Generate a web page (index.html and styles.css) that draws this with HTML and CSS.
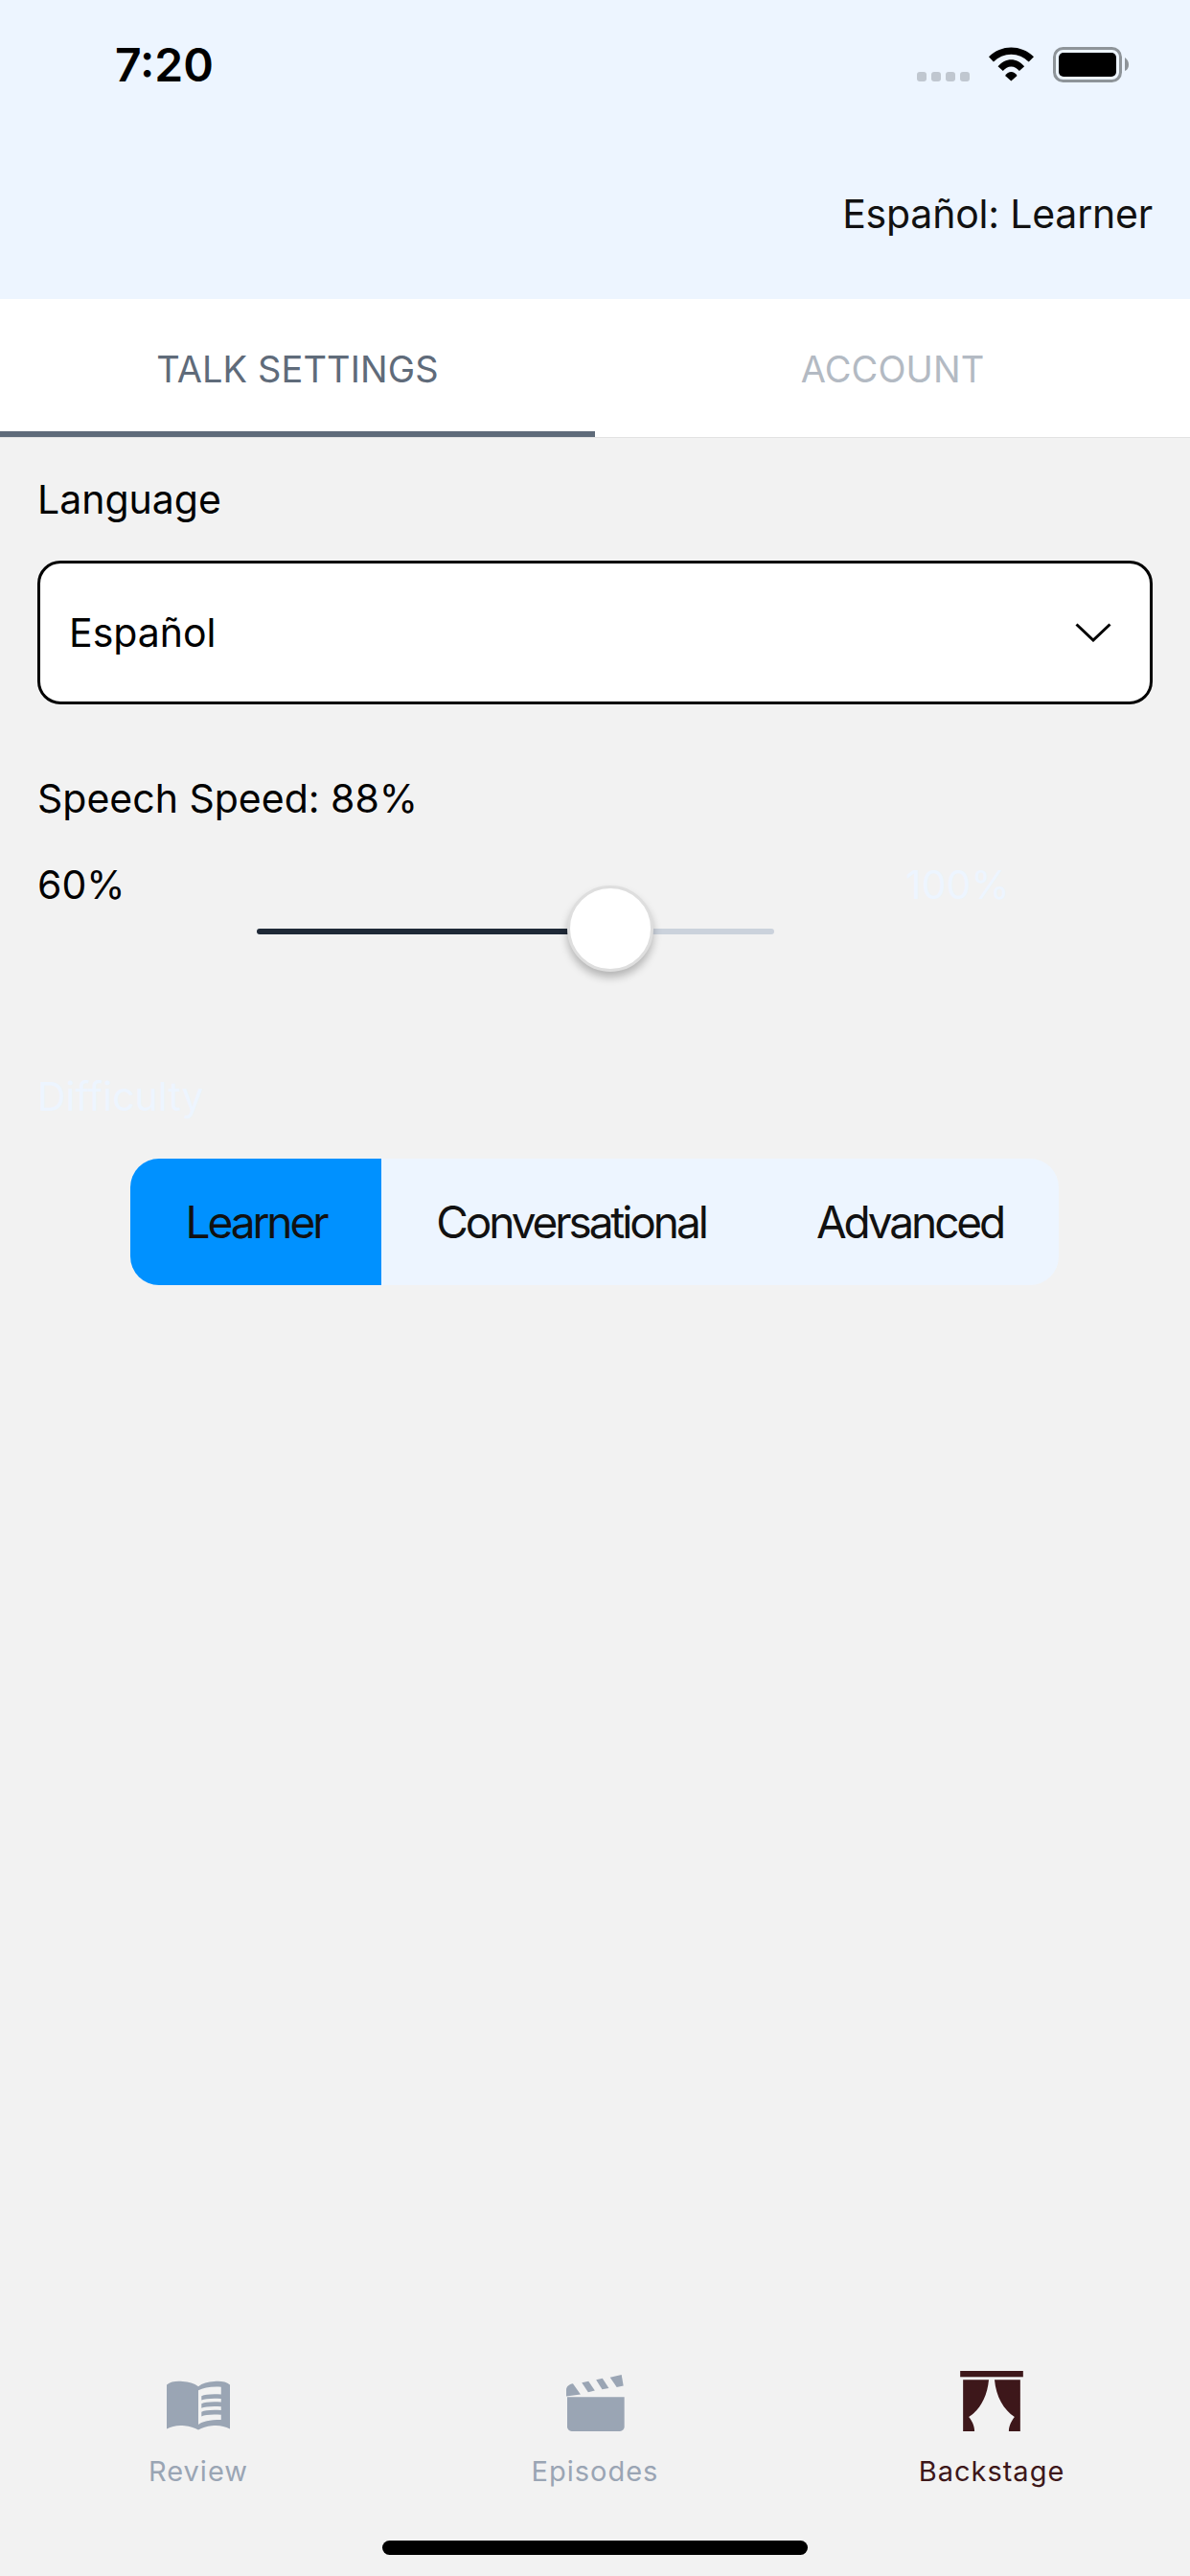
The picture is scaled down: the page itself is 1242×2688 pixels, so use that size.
FILE: index.html
```html
<!DOCTYPE html>
<html lang="es">
<head>
<meta charset="utf-8">
<title>Backstage</title>
<link rel="stylesheet" href="styles.css">
</head>
<body>
<div class="app">
  <header class="header">
    <div class="status">
      <span class="time">7:20</span>
      <div class="status-icons">
        <div class="signal"><i></i><i></i><i></i><i></i></div>
        <svg class="wifi" viewBox="305 58 143 107">
          <path d="M305 88C325 68 350 58 376 58S428 68 448 88L432 104C417 89 397 80 376 80S335 89 320 104Z"/>
          <path d="M334 118C346 105 361 97 376 97S406 105 418 118L402 133C395 125 386 119 376 119S357 125 350 133Z"/>
          <path d="M357 148C362 141 369 136 376 136S390 141 395 148L376 165Z"/>
        </svg>
        <svg class="battery" viewBox="0 0 79 37">
          <rect class="battery-shell" x="1.5" y="1.500" width="69" height="34" rx="9"/>
          <rect x="6" y="6" width="60" height="25" rx="5"/>
          <path class="battery-cap" d="M75 11C78 13 79 16 79 18.500S78 24 75 25Z"/>
        </svg>
      </div>
    </div>
    <div class="profile">Español: Learner</div>
  </header>

  <nav class="tabs">
    <div class="tab tab-active">TALK SETTINGS</div>
    <div class="tab">ACCOUNT</div>
  </nav>

  <main class="settings">
    <div class="label label-language">Language</div>
    <div class="select">
      <span>Español</span>
      <svg class="chevron" viewBox="0 0 38 20"><path d="M1.500 1.500L19 18L36.500 1.500"/></svg>
    </div>

    <div class="label label-speed">Speech Speed: 88%</div>
    <div class="speed-row">
      <span class="speed-min">60%</span>
      <div class="slider">
        <div class="slider-fill"></div>
        <div class="slider-rest"></div>
        <div class="slider-thumb"></div>
      </div>
      <span class="speed-max">100%</span>
    </div>

    <div class="label label-difficulty">Difficulty</div>
    <div class="segments">
      <div class="segment segment-active segment-learner">Learner</div>
      <div class="segment segment-conv">Conversational</div>
      <div class="segment segment-adv">Advanced</div>
    </div>
  </main>

  <footer class="tabbar">
    <div class="tabbar-item">
      <svg class="icon icon-book" viewBox="158 128 200 155">
        <path fill-rule="evenodd" d="M158 140C170 130 190 128 208 130C228 131 245 136 258 146C270 136 288 131 308 130C326 128 346 130 358 140V280C340 270 320 267 300 270C285 272 270 276 258 283C246 276 230 272 215 270C195 267 176 270 158 280ZM258 158V266C272 256 292 251 330 251V235C300 233 280 235 268 240V226C280 221 300 219 330 221V209C300 207 280 209 268 214V200C280 195 300 193 330 195V184C300 182 280 184 268 189V176C280 171 300 169 330 171V147C300 145 274 149 258 158Z"/>
      </svg>
      <span>Review</span>
    </div>
    <div class="tabbar-item">
      <svg class="icon icon-clap" viewBox="205 110 185 178">
        <path d="M207 178V158C207 147 216 140 228 138L252 172Z"/>
        <path d="M256 135L277 130L297 160L276 165Z"/>
        <path d="M301 126L321 121L341 152L320 156Z"/>
        <path d="M345 118L381 110L387 145L366 149Z"/>
        <path d="M210 180H390V274C390 282 384 288 376 288H224C216 288 210 282 210 274Z"/>
      </svg>
      <span>Episodes</span>
    </div>
    <div class="tabbar-item tabbar-active">
      <svg class="icon icon-curtain" viewBox="243 98 198 190">
        <rect x="243" y="98" width="198" height="19"/>
        <path d="M252 126H333C328 180 305 220 270 243C280 255 288 270 288 288H252Z"/>
        <path d="M351 126H432V288H396C396 270 405 255 414 243C380 220 356 180 351 126Z"/>
      </svg>
      <span>Backstage</span>
    </div>
  </footer>
  <div class="home-bar"><div class="home-indicator"></div></div>
</div>
</body>
</html>
```

FILE: styles.css
```css
* { box-sizing: border-box; }

html, body { margin: 0; padding: 0; }

body {
  width: 1242px;
  height: 2688px;
  overflow: hidden;
  background: #f2f2f2;
  font-family: Inter, "Liberation Sans", sans-serif;
  color: #000;
}

.app {
  width: 1242px;
  height: 2688px;
  display: flex;
  flex-direction: column;
}

/* Header */
.header {
  height: 312px;
  background: #edf5ff;
  display: flex;
  flex-direction: column;
}

.status {
  height: 132px;
  padding: 44px 64px 0 120px;
  display: flex;
  justify-content: space-between;
  align-items: flex-start;
}

.time {
  font-size: 48px;
  line-height: 48px;
  font-weight: 600;
}

.status-icons {
  display: flex;
  align-items: flex-start;
  padding-top: 5px;
}

.signal {
  display: flex;
  gap: 5px;
  margin-top: 26px;
  margin-right: 20px;
}

.signal i {
  width: 10px;
  height: 10px;
  border-radius: 3px;
  background: #c0c7d0;
}

.wifi { width: 47px; height: 36px; fill: #000; }

.battery { width: 79px; height: 37px; margin-left: 20px; fill: #000; }

.battery-shell { fill: none; stroke: #8e9499; stroke-width: 3; }

.battery .battery-cap { fill: #8e9499; }

.profile {
  padding: 67px 39px 0 0;
  text-align: right;
  font-size: 41px;
  line-height: 48px;
  letter-spacing: -0.2px;
  color: #111;
}

/* Top tabs */
.tabs {
  height: 145px;
  background: #fff;
  display: flex;
  border-bottom: 1px solid #e2e2e2;
}

.tab {
  flex: 1;
  display: flex;
  align-items: center;
  justify-content: center;
  padding-top: 1px;
  font-size: 38px;
  letter-spacing: 0.1px;
  color: #b3bac3;
}

.tab-active {
  color: #5f6b7a;
  border-bottom: 6px solid #5f6b7a;
  padding-top: 7px;
}

/* Settings form */
.settings {
  flex: 1;
  padding: 0 39px;
}

.label {
  font-size: 41px;
  line-height: 48px;
  color: #000;
}

.label-language { margin-top: 40px; }

.select {
  margin-top: 40px;
  height: 150px;
  background: #fff;
  border: 3px solid #000;
  border-radius: 24px;
  padding: 0 40px 0 30px;
  display: flex;
  align-items: center;
  justify-content: space-between;
  font-size: 41px;
}

.chevron {
  width: 38px;
  height: 20px;
  fill: none;
  stroke: #000;
  stroke-width: 3;
}

.label-speed { margin-top: 74px; }

.speed-row {
  margin-top: 42px;
  height: 160px;
  display: flex;
  align-items: flex-start;
  font-size: 41px;
  line-height: 48px;
}

.speed-min { width: 229px; }

.slider {
  position: relative;
  width: 540px;
  height: 6px;
  margin-top: 70px;
  display: flex;
}

.slider-fill {
  width: 330px;
  background: #1f2937;
  border-radius: 3px 0 0 3px;
}

.slider-rest {
  flex: 1;
  background: #cbd2dc;
  border-radius: 0 3px 3px 0;
}

.slider-thumb {
  position: absolute;
  left: 324px;
  top: -45px;
  width: 90px;
  height: 90px;
  border-radius: 50%;
  background: #fff;
  border: 3px solid #dedede;
  box-shadow: 0 6px 8px rgba(0, 0, 0, 0.25);
}

.speed-max {
  margin-left: 137px;
  color: #edf5ff;
}

.label-difficulty {
  margin-top: 61px;
  color: #edf5ff;
}

.segments {
  margin: 41px 98px 0 97px;
  height: 132px;
  background: #edf5ff;
  border-radius: 30px;
  overflow: hidden;
  display: flex;
  font-size: 46px;
  letter-spacing: -3.1px;
  color: #111;
}

.segment {
  display: flex;
  align-items: center;
  justify-content: center;
}

.segment-learner { width: 262px; }
.segment-conv { width: 396px; }
.segment-adv { flex: 1; }
.segment-active { background: #0091ff; }

/* Bottom navigation */
.tabbar {
  display: flex;
  height: 123px;
}

.tabbar-item {
  flex: 1;
  display: flex;
  flex-direction: column;
  align-items: center;
  font-size: 29px;
  line-height: 36px;
  letter-spacing: 1px;
  color: #9aa5b4;
}

.tabbar-item span { margin-top: auto; }

.tabbar-active { color: #3d171a; }

.icon { fill: currentColor; display: block; }

.icon-book { width: 66px; height: 52px; margin-top: 10px; }
.icon-clap { width: 62px; height: 59px; margin-top: 4px; }
.icon-curtain { width: 66px; height: 63px; }

.home-bar {
  height: 91px;
  padding-top: 54px;
  display: flex;
  justify-content: center;
}

.home-indicator {
  width: 444px;
  height: 15px;
  border-radius: 8px;
  background: #000;
}
```
